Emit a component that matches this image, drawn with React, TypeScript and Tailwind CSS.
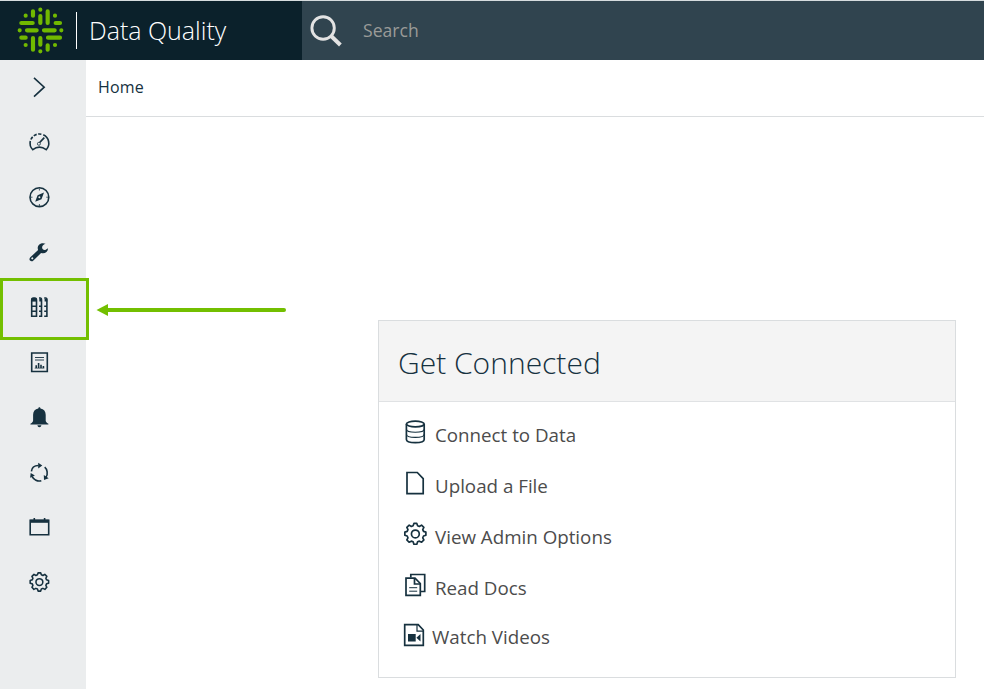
import type { ReactNode } from "react";

const GEAR =
  "M9.2 1.1h2.6l.7 2 1.6.7 1.9-1.2 2.1 2-1 2 .7 1.6 2.1.7v2.7l-2.1.7-.7 1.6 1 1.9-2 2.1-2-1-1.6.6-.7 2.2H9.200l-.7-2.2-1.600-.6-2 1-2-2.100 1-1.900-.700-1.600-2.100-.700V8.900l2.100-.700.700-1.600-1-2 2.100-2 1.900 1.200 1.600-.700z";

function Logo() {
  return (
    <svg className="h-[47px] w-[47px] shrink-0" viewBox="51 21 141 141" fill="none" stroke="#71b900" strokeWidth="12.500" strokeLinecap="round">
      <path d="M121 29v.1M77 47v.1M165 47v.1M59 91v.1M184 91v.1M77 135v.1M165 135v.1M121 154v.1" />
      <path d="M99 34v13M121 48v21M143 34v35M99 114v35M121 114v20M143 136v13" />
      <path d="M64 69h34M167 69h13M81 91h29M132 91h32M64 113h13M144 113h36" />
    </svg>
  );
}

function NavIcon({ children }: { children: ReactNode }) {
  return (
    <li className="flex h-[55px] items-center pl-[29px]">
      <svg className="h-[21px] w-[21px] overflow-visible" viewBox="0 0 21 21" fill="none" stroke="#16313f" strokeWidth="1.600">
        {children}
      </svg>
    </li>
  );
}

function Sidebar() {
  return (
    <ul className="w-[86px] shrink-0 bg-[#ebedee]">
      <NavIcon>
        <path d="M5 .8 15.200 10.200 5 19.700" />
      </NavIcon>
      <NavIcon>
        <path d="M14.300 2.800A9.300 9.300 0 0 1 17.200 17.700Q10.300 12.500 3.800 17.700A9.300 9.300 0 0 1 1.300 9" />
        <path d="M1.900 7.500A9.300 9.300 0 0 1 13.500 2.500" strokeDasharray="3.200 1.500" />
        <path d="m10.800 10.400 4.500-4.800" />
        <circle cx="9.900" cy="11.800" r="1.500" strokeWidth=".8" />
      </NavIcon>
      <NavIcon>
        <circle cx="10.400" cy="10.200" r="9.400" />
        <path d="M10.400 1.500v2M10.400 17v2M1.500 10.200h2M17.300 10.200h2" strokeWidth=".8" />
        <path d="m15 5.600-2.500 6.600-6.300 2.600 2.400-6.600z" fill="#16313f" stroke="none" />
        <circle cx="10.400" cy="10.300" r="1" fill="#ebedee" stroke="none" />
      </NavIcon>
      <NavIcon>
        <path fillRule="evenodd" fill="#16313f" stroke="none" d="M16.600 1.700c-3.600-1.600-7.800.400-7.900 4.300 0 .8.200 1.500.4 2.100L1.300 15.300c-1 1-1.100 2.500-.3 3.300.9 1 2.300 1 3.400-.1l7.700-7.500c3.400 1.200 6.700-.8 7-4.800l-2.800 1.700c-1.900.500-3.600-1.100-3.100-3.200.3-1.500 1.600-2.500 3.400-3zM3.900 15.600a1 1 0 1 1-1.400 1.400 1 1 0 0 1 1.400-1.400z" />
      </NavIcon>
      <NavIcon>
        <path d="M2.700 3.200q0-2.200 1.600-2.200h1.500q1.700 0 1.700 2.200v16H2.700z" />
        <path d="M2.500 1h5v3.600h-5z" fill="#16313f" stroke="none" />
        <path d="M2.500 9.300h5M2.500 14.200h5" />
        <path d="M10 1h1.300q1.200 0 1.200 2v16.200H10M15.200 1h1.500q1.200 0 1.200 2v16.200h-2.700M10 9.300h2.700M10 14.200h2.700M15.200 9.300h2.700M15.200 14.200h2.700" />
        <path d="M10.300 1.700h2.700v2.900h-2.700zM15.600 1.700h2.700v2.900h-2.700z" fill="#16313f" stroke="none" />
      </NavIcon>
      <NavIcon>
        <path d="M2.700 1h15.600v18.500H2.700z" />
        <path d="M6 5.500h9M6 8h9" strokeWidth=".9" />
        <path d="M7.200 13.300v2.700M9.600 11v5M12 12.700V16M14.400 14v2" strokeWidth="1.600" />
        <path d="M5.700 16.200h9.600" strokeWidth=".7" />
      </NavIcon>
      <NavIcon>
        <path fill="#16313f" stroke="none" d="M10.400.3c.6 0 1 .5 1.100 1.200 3.300.6 5.200 2.900 5.200 6.200v5.800c0 1.200.6 2 2.700 3.300v.6h-18v-.6c2.100-1.300 2.700-2.100 2.700-3.300V7.700c0-3.300 1.900-5.600 5.200-6.200.1-.7.500-1.200 1.100-1.200zM8.400 18.300h4c-.2 1.200-.9 1.900-2 1.900s-1.800-.7-2-1.900z" />
      </NavIcon>
      <NavIcon>
        <path d="M2.400 9.400C2.700 6 5.300 3.500 9.500 3.500M15.700 5.200c2.600 2.200 3.500 6.700 1.300 9.900M12.300 18.700c-3.800 1-7.500-1-9.200-4.200" strokeWidth="1.600" />
        <path d="M9.200.7 13.300 3.600 9.200 6.500zM14.800 13.100l.2 4.800 4.700-1.600zM1.100 15.700l.6-4.700 4.200 2.500z" fill="#16313f" stroke="none" />
      </NavIcon>
      <NavIcon>
        <path d="M1.200 3.200h18.500v14.600H1.200z" />
        <path d="M1.200 2.700h18.500v3.100H1.200z" fill="#16313f" stroke="none" />
        <path d="M5.300 1.100v2M15.600 1.100v2" />
      </NavIcon>
      <NavIcon>
        <g transform="translate(.1 -.2) scale(.98)">
          <path d={GEAR} strokeLinejoin="round" />
          <circle cx="10.500" cy="10.500" r="3.500" />
        </g>
      </NavIcon>
    </ul>
  );
}

function CardLink({ icon, children, className }: { icon: ReactNode; children: ReactNode; className: string }) {
  return (
    <li className={`flex items-start whitespace-nowrap ${className}`}>
      <svg className="h-6 w-6 shrink-0 overflow-visible" viewBox="0 0 24 24" fill="none" stroke="#16313f" strokeWidth="1.700">
        {icon}
      </svg>
      <span className="mt-[3px] text-[18.750px] leading-6">{children}</span>
    </li>
  );
}

function GetConnected() {
  return (
    <section className="h-[358px] w-[578px] border border-[#dadddf] bg-white">
      <h1 className="flex h-[81px] items-center border-b border-[#e0e2e4] bg-[#f4f4f4] pt-0.5 pl-[19px] text-[30px] font-light text-[#16313f]">
        Get Connected
      </h1>
      <ul className="pt-[18px] pl-6 text-[#4c4c4c]">
        <CardLink
          className="h-[51px] gap-2"
          icon={
            <>
              <ellipse cx="12.300" cy="4" rx="8.900" ry="2.900" />
              <path d="M3.400 4v15.400c0 4.200 17.800 4.200 17.800 0V4" />
              <path d="M3.400 9.200c0 4 17.800 4 17.800 0M3.400 14.200c0 4.200 17.800 4.200 17.800 0" strokeWidth="1.100" />
            </>
          }
        >
          Connect to Data
        </CardLink>
        <CardLink className="h-[51px] gap-2" icon={<path d="M4 1.500h10.300l5.900 6.200v15H4z" />}>
          Upload a File
        </CardLink>
        <CardLink
          className="h-[51px] gap-2"
          icon={
            <g transform="translate(.600 .200) scale(1.120)">
              <path d={GEAR} strokeLinejoin="round" strokeWidth="1.500" />
              <circle cx="10.500" cy="10.500" r="3.500" strokeWidth="1.500" />
            </g>
          }
        >
          View Admin Options
        </CardLink>
        <CardLink
          className="h-[50px] gap-2"
          icon={
            <>
              <path d="M7.800 4.500V1.500h13.900v17h-4" />
              <path d="M3 5.200h9l5.300 5.300v11.800H3z" />
              <path d="M11.500 5.500V11H17" />
              <path d="M6.200 14.700h8M6.200 18.200h8" strokeWidth="1" />
            </>
          }
        >
          Read Docs
        </CardLink>
        <CardLink
          className="-mt-px h-6 gap-[5px]"
          icon={
            <>
              <path d="M1.700 2.700h13.500L20.300 8v15.400H1.700z" />
              <path d="M14 3v6.200h6" strokeWidth="1.200" />
              <path d="M5 12h7.700v7.400H5zM17.500 12v7.400L13.400 15.700z" fill="#16313f" stroke="none" />
            </>
          }
        >
          Watch Videos
        </CardLink>
      </ul>
    </section>
  );
}

export default function App() {
  return (
    <div className="relative flex h-[689px] w-[984px] flex-col overflow-hidden bg-white font-['Open_Sans','Noto_Sans',sans-serif]">
      <header className="flex h-[60px] shrink-0 border-t border-[#d6dcde]">
        <div className="flex w-[302px] shrink-0 items-center bg-[#0b212b] pl-[17px]">
          <Logo />
          <div className="ml-3 h-[37px] w-px bg-white" />
          <span className="ml-3 text-[25px] font-light whitespace-nowrap text-white">Data Quality</span>
        </div>
        <div className="flex flex-1 items-center bg-[#30444f] pl-2">
          <svg className="h-8 w-8" viewBox="0 0 32 32" fill="none" stroke="#e3e3e3">
            <circle cx="13.100" cy="13" r="11.200" strokeWidth="2.900" />
            <path d="m21.100 21 9.300 9" strokeWidth="3.900" />
          </svg>
          <span className="ml-[21px] text-[17.600px] text-[#9a9b98]">Search</span>
        </div>
      </header>
      <div className="flex flex-1">
        <Sidebar />
        <main className="flex flex-1 flex-col">
          <nav className="flex h-[57px] items-center border-b border-[#dadddf] pb-0.5 pl-3 text-[16px] tracking-[0.200px] text-[#16313f]">Home</nav>
          <div className="pt-[203px] pl-[292px]">
            <GetConnected />
          </div>
        </main>
      </div>
      <div className="absolute top-[278px] left-0 h-[62px] w-[89px] border-3 border-[#73bf00]" />
      <svg className="absolute top-[304px] left-[96px] h-3 w-[191px]" viewBox="0 0 191 12">
        <path d="M11 6h177" stroke="#73bf00" strokeWidth="4" strokeLinecap="round" />
        <path d="M.5 6 12 0v12z" fill="#73bf00" />
      </svg>
    </div>
  );
}
